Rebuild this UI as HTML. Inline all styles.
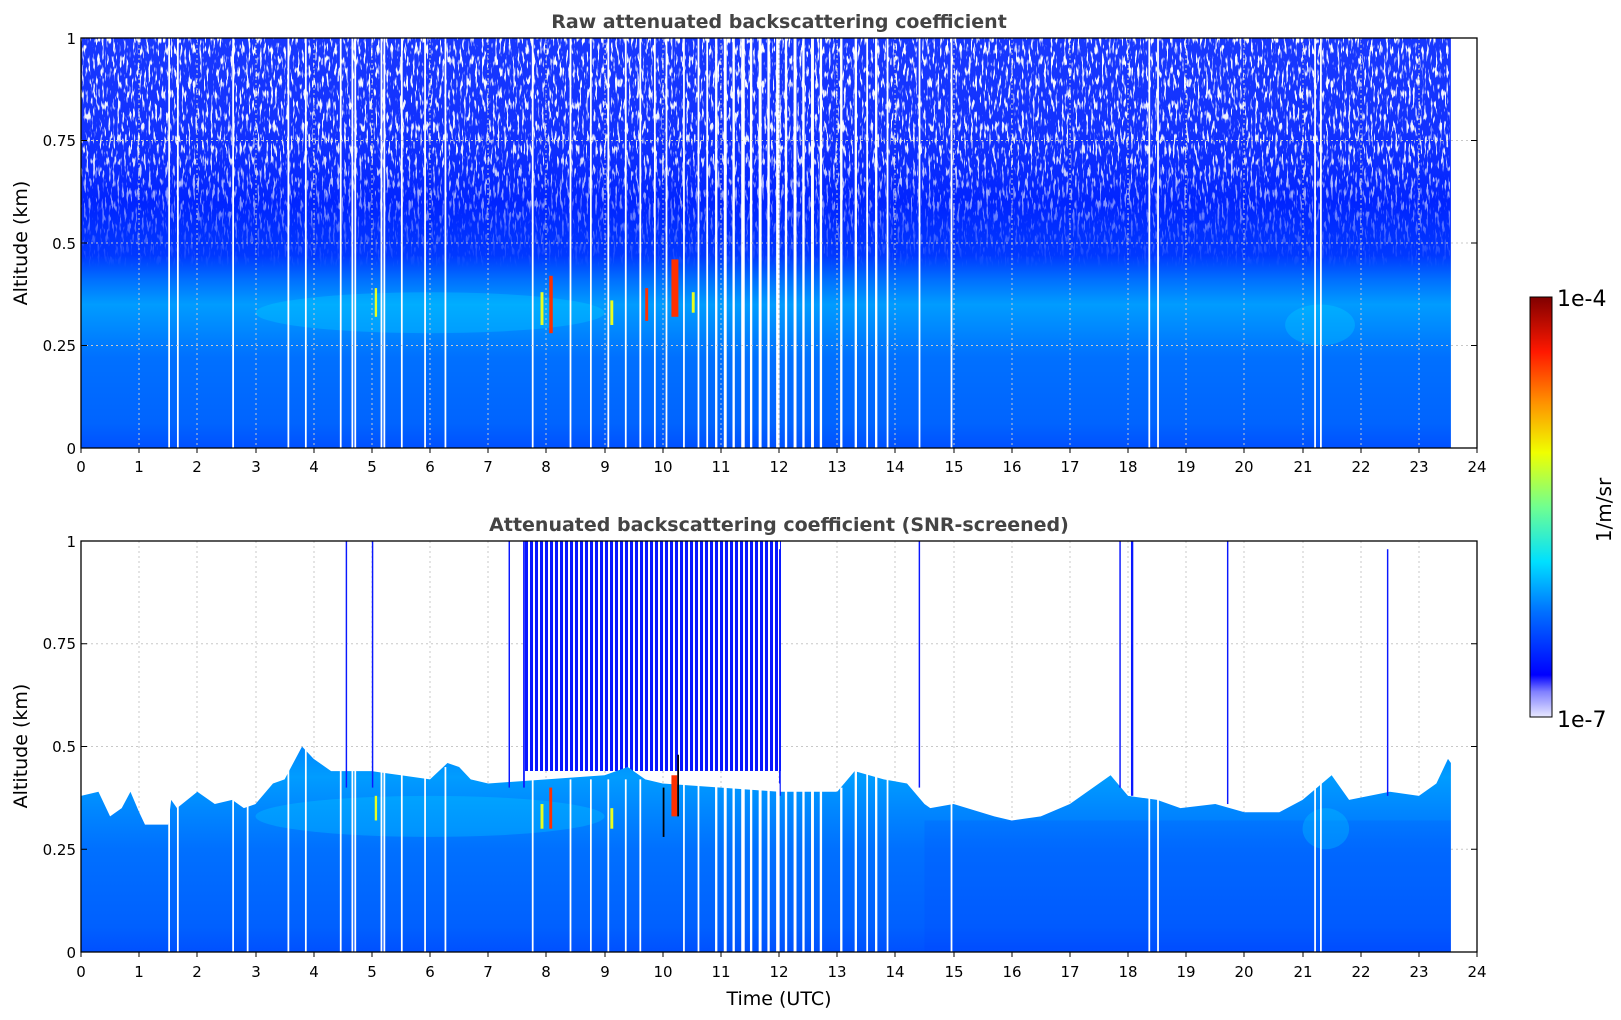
<!DOCTYPE html>
<html><head><meta charset="utf-8"><style>
html,body{margin:0;padding:0;background:#fff;width:1621px;height:1020px;overflow:hidden}
svg{display:block;font-family:"DejaVu Sans","Liberation Sans",sans-serif}
</style></head><body>
<svg width="1621" height="1020" viewBox="0 0 1621 1020" xmlns="http://www.w3.org/2000/svg">
<defs>
<linearGradient id="g1" x1="0" y1="0" x2="0" y2="1" gradientUnits="objectBoundingBox">
<stop offset="0" stop-color="#0050ff"/><stop offset="0.06" stop-color="#0064ff"/>
<stop offset="0.22" stop-color="#0070ff"/><stop offset="0.29" stop-color="#0088ff"/>
<stop offset="0.35" stop-color="#009cff"/><stop offset="0.41" stop-color="#0070ff"/>
<stop offset="0.47" stop-color="#0038ff"/><stop offset="0.6" stop-color="#0024ff"/>
<stop offset="0.75" stop-color="#1030ff"/><stop offset="1" stop-color="#1838ff"/>
</linearGradient>
<linearGradient id="g2" x1="0" y1="0" x2="0" y2="1">
<stop offset="0" stop-color="#0050ff"/><stop offset="0.12" stop-color="#0060ff"/>
<stop offset="0.5" stop-color="#0070ff"/><stop offset="0.7" stop-color="#0088ff"/>
<stop offset="0.85" stop-color="#009cff"/><stop offset="1" stop-color="#0088ff"/>
</linearGradient>
<linearGradient id="cb" x1="0" y1="1" x2="0" y2="0">
<stop offset="0" stop-color="#e8e8ff"/><stop offset="0.06" stop-color="#8080ff"/>
<stop offset="0.1" stop-color="#0000ff"/><stop offset="0.25" stop-color="#0070ff"/>
<stop offset="0.37" stop-color="#00e0ff"/><stop offset="0.5" stop-color="#70ff90"/>
<stop offset="0.63" stop-color="#f0ff00"/><stop offset="0.75" stop-color="#ff9000"/>
<stop offset="0.87" stop-color="#ff1800"/><stop offset="1" stop-color="#800000"/>
</linearGradient>
<linearGradient id="fade" x1="0" y1="0" x2="0" y2="1">
<stop offset="0" stop-color="#fff" stop-opacity="1"/><stop offset="0.5" stop-color="#fff" stop-opacity="0.9"/><stop offset="1" stop-color="#fff" stop-opacity="0"/>
</linearGradient>
<mask id="fm" maskUnits="userSpaceOnUse" x="81" y="38" width="1369" height="230">
<rect x="81" y="38" width="1369" height="230" fill="url(#fade)"/>
</mask>
<filter id="n1" x="0" y="0" width="100%" height="100%">
<feTurbulence type="fractalNoise" baseFrequency="0.45 0.09" numOctaves="2" seed="3"/>
<feColorMatrix type="matrix" values="0 0 0 0 1  0 0 0 0 1  0 0 0 0 1  9 0 0 0 -5.0"/>
</filter>
<pattern id="st" width="5" height="10" patternUnits="userSpaceOnUse">
<rect width="5" height="10" fill="#fff"/><rect width="3" height="10" fill="#0a18ff"/>
</pattern>
</defs>

<!-- ===== PLOT 1 ===== -->
<g transform="translate(81,448) scale(58.17,-410)">
<rect x="0" y="0" width="23.55" height="1" fill="url(#g1)"/>
</g>
<g mask="url(#fm)"><rect x="81" y="38" width="1369" height="230" fill="#fff" filter="url(#n1)"/></g>
<g transform="translate(81,448) scale(58.17,-410)">
<g fill="#00d8ff" opacity="0.3">
<ellipse cx="6" cy="0.33" rx="3" ry="0.05"/><ellipse cx="21.3" cy="0.3" rx="0.6" ry="0.05"/>
</g>
<g fill="#ff3000"><rect x="8.05" y="0.28" width="0.06" height="0.14"/><rect x="10.15" y="0.32" width="0.12" height="0.14"/><rect x="9.7" y="0.31" width="0.05" height="0.08"/></g>
<g fill="#e8ff20"><rect x="7.9" y="0.3" width="0.05" height="0.08"/><rect x="5.05" y="0.32" width="0.04" height="0.07"/><rect x="9.1" y="0.3" width="0.05" height="0.06"/><rect x="10.5" y="0.33" width="0.05" height="0.05"/></g>
<g fill="#fff">
<rect x="1.5" y="0" width="0.03" height="1"/><rect x="1.65" y="0" width="0.03" height="1"/><rect x="2.6" y="0" width="0.03" height="1"/><rect x="3.55" y="0" width="0.03" height="1"/><rect x="3.85" y="0" width="0.03" height="1"/><rect x="4.45" y="0" width="0.03" height="1"/><rect x="4.65" y="0" width="0.03" height="1"/><rect x="4.7" y="0" width="0.03" height="1"/><rect x="5.15" y="0" width="0.03" height="1"/><rect x="5.2" y="0" width="0.03" height="1"/><rect x="5.5" y="0" width="0.03" height="1"/><rect x="5.9" y="0" width="0.03" height="1"/><rect x="6.25" y="0" width="0.03" height="1"/>
<rect x="7.75" y="0" width="0.03" height="1"/><rect x="8.4" y="0" width="0.03" height="1"/><rect x="8.75" y="0" width="0.03" height="1"/><rect x="9.05" y="0" width="0.03" height="1"/><rect x="9.35" y="0" width="0.03" height="1"/><rect x="9.6" y="0" width="0.03" height="1"/><rect x="9.85" y="0" width="0.03" height="1"/><rect x="10.05" y="0" width="0.03" height="1"/><rect x="10.35" y="0" width="0.03" height="1"/><rect x="10.6" y="0" width="0.03" height="1"/><rect x="10.75" y="0" width="0.03" height="1"/>
<rect x="10.9" y="0" width="0.04" height="1"/><rect x="11.05" y="0" width="0.05" height="1"/><rect x="11.2" y="0" width="0.04" height="1"/><rect x="11.35" y="0" width="0.06" height="1"/><rect x="11.5" y="0" width="0.04" height="1"/><rect x="11.65" y="0" width="0.05" height="1"/><rect x="11.8" y="0" width="0.04" height="1"/><rect x="11.95" y="0" width="0.06" height="1"/><rect x="12.1" y="0" width="0.04" height="1"/><rect x="12.25" y="0" width="0.05" height="1"/><rect x="12.4" y="0" width="0.04" height="1"/><rect x="12.55" y="0" width="0.05" height="1"/><rect x="12.7" y="0" width="0.04" height="1"/>
<rect x="13.05" y="0" width="0.04" height="1"/><rect x="13.3" y="0" width="0.04" height="1"/><rect x="13.5" y="0" width="0.03" height="1"/><rect x="13.65" y="0" width="0.04" height="1"/><rect x="13.85" y="0" width="0.03" height="1"/><rect x="14.4" y="0" width="0.03" height="1"/><rect x="14.95" y="0" width="0.03" height="1"/><rect x="18.35" y="0" width="0.03" height="1"/><rect x="18.5" y="0" width="0.03" height="1"/><rect x="21.2" y="0" width="0.03" height="1"/><rect x="21.3" y="0" width="0.03" height="1"/>
</g>
</g>
<g stroke="#c8c8c8" stroke-width="1" stroke-dasharray="2,3">
<path d="M139 38V448M197 38V448M256 38V448M314 38V448M372 38V448M430 38V448M488 38V448M546 38V448M605 38V448M663 38V448M721 38V448M779 38V448M837 38V448M895 38V448M954 38V448M1012 38V448M1070 38V448M1128 38V448M1186 38V448M1244 38V448M1303 38V448M1361 38V448M1419 38V448"/>
<path d="M81 140.5H1477M81 243H1477M81 345.5H1477"/>
<path d="M139 541V952M197 541V952M256 541V952M314 541V952M372 541V952M430 541V952M488 541V952M546 541V952M605 541V952M663 541V952M721 541V952M779 541V952M837 541V952M895 541V952M954 541V952M1012 541V952M1070 541V952M1128 541V952M1186 541V952M1244 541V952M1303 541V952M1361 541V952M1419 541V952"/>
<path d="M81 643.7H1477M81 746.5H1477M81 849.2H1477"/>
</g>

<!-- ===== PLOT 2 ===== -->
<rect x="523" y="541" width="258" height="230" fill="url(#st)"/>
<g transform="translate(81,952) scale(58.17,-411)">
<path fill="url(#g2)" d="M0 0V0.38L0.3 0.39L0.5 0.33L0.7 0.35L0.85 0.39L1 0.34L1.1 0.31L1.5 0.31L1.55 0.37L1.65 0.35L2 0.39L2.3 0.36L2.6 0.37L2.8 0.35L3 0.36L3.3 0.41L3.5 0.42L3.8 0.5L4 0.47L4.3 0.44L5 0.44L5.5 0.43L6 0.42L6.3 0.46L6.5 0.45L6.7 0.42L7 0.41L8 0.42L9 0.43L9.4 0.45L9.7 0.42L10 0.41L11 0.4L12 0.39L13 0.39L13.3 0.44L13.8 0.42L14.2 0.41L14.5 0.36L14.6 0.35L15 0.36L15.7 0.33L16 0.32L16.5 0.33L17 0.36L17.7 0.43L18 0.38L18.5 0.37L18.9 0.35L19.5 0.36L20 0.34L20.6 0.34L21 0.37L21.5 0.43L21.8 0.37L22.5 0.39L23 0.38L23.3 0.41L23.5 0.47L23.55 0.46V0Z"/>
<g fill="#0030ff" opacity="0.12"><rect x="14.5" y="0" width="9.05" height="0.32"/></g>
<g fill="#00d0ff" opacity="0.3"><ellipse cx="6" cy="0.33" rx="3" ry="0.05"/><ellipse cx="21.4" cy="0.3" rx="0.4" ry="0.05"/></g>
<g fill="#ff3000"><rect x="8.05" y="0.3" width="0.05" height="0.1"/><rect x="10.15" y="0.33" width="0.1" height="0.1"/></g>
<g fill="#000"><rect x="10.0" y="0.28" width="0.03" height="0.12"/><rect x="10.25" y="0.33" width="0.03" height="0.15"/></g>
<g fill="#e8ff20"><rect x="7.9" y="0.3" width="0.05" height="0.06"/><rect x="5.05" y="0.32" width="0.04" height="0.06"/><rect x="9.1" y="0.3" width="0.05" height="0.05"/></g>
<g fill="#0a18ff">
<rect x="4.55" y="0.4" width="0.025" height="0.6"/><rect x="5" y="0.4" width="0.025" height="0.6"/><rect x="7.35" y="0.4" width="0.025" height="0.6"/><rect x="7.6" y="0.4" width="0.03" height="0.6"/><rect x="12.0" y="0.38" width="0.03" height="0.6"/><rect x="14.4" y="0.4" width="0.025" height="0.6"/><rect x="17.85" y="0.4" width="0.025" height="0.6"/><rect x="18.05" y="0.38" width="0.04" height="0.62"/><rect x="19.7" y="0.36" width="0.025" height="0.64"/><rect x="22.45" y="0.38" width="0.025" height="0.6"/>
</g>
<g fill="#fff">
<rect x="1.5" y="0" width="0.03" height="0.4"/><rect x="1.65" y="0" width="0.03" height="0.4"/><rect x="2.6" y="0" width="0.03" height="0.4"/><rect x="2.85" y="0" width="0.03" height="0.4"/><rect x="3.55" y="0" width="0.03" height="0.45"/><rect x="3.85" y="0" width="0.03" height="0.5"/><rect x="4.45" y="0" width="0.03" height="0.45"/><rect x="4.65" y="0" width="0.03" height="0.45"/><rect x="4.7" y="0" width="0.03" height="0.45"/><rect x="5.15" y="0" width="0.03" height="0.45"/><rect x="5.2" y="0" width="0.03" height="0.45"/><rect x="5.5" y="0" width="0.03" height="0.45"/><rect x="5.9" y="0" width="0.03" height="0.45"/><rect x="6.25" y="0" width="0.03" height="0.45"/>
<rect x="7.75" y="0" width="0.03" height="0.42"/><rect x="8.4" y="0" width="0.03" height="0.42"/><rect x="8.75" y="0" width="0.03" height="0.42"/><rect x="9.05" y="0" width="0.03" height="0.42"/><rect x="9.35" y="0" width="0.03" height="0.42"/><rect x="9.6" y="0" width="0.03" height="0.42"/><rect x="10.35" y="0" width="0.03" height="0.42"/><rect x="10.6" y="0" width="0.03" height="0.42"/>
<rect x="10.9" y="0" width="0.04" height="0.41"/><rect x="11.05" y="0" width="0.05" height="0.41"/><rect x="11.2" y="0" width="0.04" height="0.41"/><rect x="11.35" y="0" width="0.06" height="0.41"/><rect x="11.5" y="0" width="0.04" height="0.41"/><rect x="11.65" y="0" width="0.05" height="0.41"/><rect x="11.8" y="0" width="0.04" height="0.41"/><rect x="11.95" y="0" width="0.06" height="0.41"/><rect x="12.1" y="0" width="0.04" height="0.4"/><rect x="12.25" y="0" width="0.05" height="0.4"/><rect x="12.4" y="0" width="0.04" height="0.4"/><rect x="12.55" y="0" width="0.05" height="0.4"/><rect x="12.7" y="0" width="0.04" height="0.4"/>
<rect x="13.05" y="0" width="0.04" height="0.4"/><rect x="13.3" y="0" width="0.04" height="0.45"/><rect x="13.5" y="0" width="0.03" height="0.45"/><rect x="13.65" y="0" width="0.04" height="0.45"/><rect x="13.85" y="0" width="0.03" height="0.45"/><rect x="14.95" y="0" width="0.03" height="0.4"/><rect x="18.35" y="0" width="0.03" height="0.4"/><rect x="18.5" y="0" width="0.03" height="0.4"/><rect x="21.2" y="0" width="0.03" height="0.45"/><rect x="21.3" y="0" width="0.03" height="0.45"/>
</g>
</g>

<!-- axes frames -->
<rect x="81" y="38" width="1396" height="410" fill="none" stroke="#000" stroke-width="1.3"/>
<rect x="81" y="541" width="1396" height="411" fill="none" stroke="#000" stroke-width="1.3"/>
<g stroke="#000" stroke-width="1">
<path d="M81 448v5M139 448v5M197 448v5M256 448v5M314 448v5M372 448v5M430 448v5M488 448v5M546 448v5M605 448v5M663 448v5M721 448v5M779 448v5M837 448v5M895 448v5M954 448v5M1012 448v5M1070 448v5M1128 448v5M1186 448v5M1244 448v5M1303 448v5M1361 448v5M1419 448v5M1477 448v5"/>
<path d="M81 952v5M139 952v5M197 952v5M256 952v5M314 952v5M372 952v5M430 952v5M488 952v5M546 952v5M605 952v5M663 952v5M721 952v5M779 952v5M837 952v5M895 952v5M954 952v5M1012 952v5M1070 952v5M1128 952v5M1186 952v5M1244 952v5M1303 952v5M1361 952v5M1419 952v5M1477 952v5"/>
<path d="M81 38h6M81 140.5h6M81 243h6M81 345.5h6M81 448h6M1477 140.5h-6M1477 243h-6M1477 345.5h-6"/>
<path d="M81 541h6M81 643.7h6M81 746.5h6M81 849.2h6M81 952h6M1477 643.7h-6M1477 746.5h-6M1477 849.2h-6"/>
</g>

<!-- tick labels -->
<g font-size="15" fill="#000" text-anchor="middle">
<g transform="translate(0,472)">
<text x="81">0</text><text x="139">1</text><text x="197">2</text><text x="256">3</text><text x="314">4</text><text x="372">5</text><text x="430">6</text><text x="488">7</text><text x="546">8</text><text x="605">9</text><text x="663">10</text><text x="721">11</text><text x="779">12</text><text x="837">13</text><text x="895">14</text><text x="954">15</text><text x="1012">16</text><text x="1070">17</text><text x="1128">18</text><text x="1186">19</text><text x="1244">20</text><text x="1303">21</text><text x="1361">22</text><text x="1419">23</text><text x="1477">24</text>
</g>
<g transform="translate(0,977)">
<text x="81">0</text><text x="139">1</text><text x="197">2</text><text x="256">3</text><text x="314">4</text><text x="372">5</text><text x="430">6</text><text x="488">7</text><text x="546">8</text><text x="605">9</text><text x="663">10</text><text x="721">11</text><text x="779">12</text><text x="837">13</text><text x="895">14</text><text x="954">15</text><text x="1012">16</text><text x="1070">17</text><text x="1128">18</text><text x="1186">19</text><text x="1244">20</text><text x="1303">21</text><text x="1361">22</text><text x="1419">23</text><text x="1477">24</text>
</g>
</g>
<g font-size="15" fill="#000" text-anchor="end">
<text x="76" y="44">1</text><text x="76" y="146">0.75</text><text x="76" y="249">0.5</text><text x="76" y="351">0.25</text><text x="76" y="454">0</text>
<text x="76" y="547">1</text><text x="76" y="649">0.75</text><text x="76" y="752">0.5</text><text x="76" y="855">0.25</text><text x="76" y="958">0</text>
</g>

<g font-size="19" fill="#444" font-weight="bold" text-anchor="middle">
<text x="779" y="28">Raw attenuated backscattering coefficient</text>
<text x="779" y="531">Attenuated backscattering coefficient (SNR-screened)</text>
</g>
<g font-size="19" fill="#000" text-anchor="middle">
<text transform="translate(27,243) rotate(-90)">Altitude (km)</text>
<text transform="translate(27,746) rotate(-90)">Altitude (km)</text>
<text x="779" y="1005">Time (UTC)</text>
</g>

<!-- colorbar -->
<rect x="1530" y="297" width="22" height="420" fill="url(#cb)" stroke="#000" stroke-width="1"/>
<g font-size="22" fill="#000">
<text x="1557" y="306">1e-4</text>
<text x="1557" y="727">1e-7</text>
<text transform="translate(1611,510) rotate(-90)" text-anchor="middle" font-size="20">1/m/sr</text>
</g>
</svg>
</body></html>
